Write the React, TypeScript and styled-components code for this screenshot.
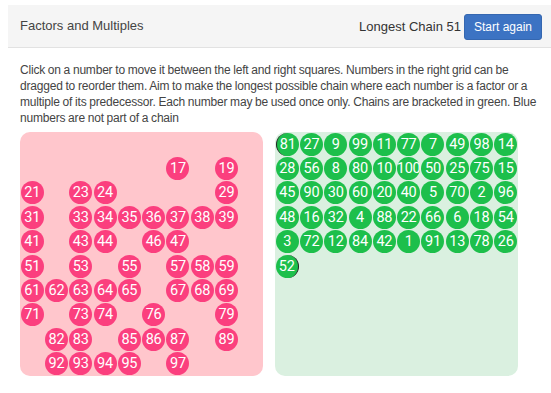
import React, { useState } from 'react';
import styled, { createGlobalStyle, css } from 'styled-components';

const GlobalStyle = createGlobalStyle`
  body {
    margin: 0;
    background: #fff;
    font-family: "Liberation Sans", Arial, sans-serif;
    color: #333;
  }
`;

const Page = styled.div`
  padding: 5px 0 0 8px;
`;

const Header = styled.header`
  display: flex;
  justify-content: space-between;
  align-items: center;
  height: 43px;
  padding: 0 9px 0 12px;
  background: #f5f5f5;
  border-bottom: 1px solid #e2e2e2;
  box-sizing: border-box;
`;

const Title = styled.div`
  font-size: 13px;
  color: #444;
  margin-top: -1px;
`;

const Status = styled.div`
  display: flex;
  align-items: center;
  gap: 3px;
  font-size: 13px;
  color: #333;
`;

const Button = styled.button`
  height: 26px;
  padding: 0 9px;
  margin-top: 2px;
  border: 1px solid #3567b0;
  border-radius: 3px;
  background: #3c73c3;
  color: #fff;
  font-family: "Liberation Sans", Arial, sans-serif;
  font-size: 12px;
  cursor: pointer;
`;

const Intro = styled.p`
  margin: 14px 0 0 12px;
  max-width: 529px;
  font-size: 12px;
  letter-spacing: -0.2px;
  word-spacing: -0.3px;
  line-height: 16px;
  color: #444;
`;

const Boards = styled.div`
  display: flex;
  gap: 12px;
  margin: 6px 0 0 12px;
`;

const Board = styled.div<{ $side: 'left' | 'right' }>`
  width: 243px;
  height: 244px;
  border-radius: 10px;
  box-sizing: border-box;
  background: ${p => (p.$side === 'left' ? '#ffc6cc' : '#daf0e0')};
`;

const LeftGrid = styled(Board)`
  display: grid;
  grid-template-columns: repeat(10, 24.3px);
  grid-template-rows: repeat(10, 24.4px);
  align-items: center;
  justify-items: center;
`;

const RightFlow = styled(Board)`
  display: flex;
  flex-wrap: wrap;
  align-content: flex-start;
`;

const Slot = styled.div`
  width: 24.3px;
  height: 24.4px;
  display: flex;
  align-items: center;
  justify-content: center;
`;

const Ball = styled.div<{ $tone: 'pink' | 'green'; $bracket?: 'start' | 'end' }>`
  width: 23px;
  height: 23px;
  border-radius: 50%;
  box-sizing: border-box;
  display: flex;
  align-items: center;
  justify-content: center;
  white-space: nowrap;
  font-family: Roboto, "Liberation Sans", sans-serif;
  font-size: 14.5px;
  letter-spacing: -0.2px;
  color: #fff;
  cursor: pointer;
  user-select: none;
  background: ${p => (p.$tone === 'pink' ? '#fb3f7e' : '#1dbf4b')};
  ${p =>
    p.$bracket === 'start' &&
    css`
      border-left: 1.5px solid #222;
    `}
  ${p =>
    p.$bracket === 'end' &&
    css`
      border-right: 1.5px solid #222;
    `}
`;

const chainStart = [
  81, 27, 9, 99, 11, 77, 7, 49, 98, 14,
  28, 56, 8, 80, 10, 100, 50, 25, 75, 15,
  45, 90, 30, 60, 20, 40, 5, 70, 2, 96,
  48, 16, 32, 4, 88, 22, 66, 6, 18, 54,
  3, 72, 12, 84, 42, 1, 91, 13, 78, 26,
  52,
];

const App: React.FC = () => {
  const [chain, setChain] = useState<number[]>(chainStart);

  const pool = Array.from({ length: 100 }, (_, i) => i + 1).filter(n => !chain.includes(n));

  const toggle = (n: number) => {
    setChain(c => (c.includes(n) ? c.filter(x => x !== n) : [...c, n]));
  };

  return (
    <Page>
      <GlobalStyle />
      <Header>
        <Title>Factors and Multiples</Title>
        <Status>
          <span>Longest Chain {chain.length}</span>
          <Button onClick={() => setChain([])}>Start again</Button>
        </Status>
      </Header>

      <Intro>
        Click on a number to move it between the left and right squares. Numbers in the right grid can be
        dragged to reorder them. Aim to make the longest possible chain where each number is a factor or a
        multiple of its predecessor. Each number may be used once only. Chains are bracketed in green. Blue
        numbers are not part of a chain
      </Intro>

      <Boards>
        <LeftGrid $side="left">
          {pool.map(n => (
            <Ball
              key={n}
              $tone="pink"
              onClick={() => toggle(n)}
              style={{ gridRow: Math.floor((n - 1) / 10) + 1, gridColumn: ((n - 1) % 10) + 1 }}
            >
              {n}
            </Ball>
          ))}
        </LeftGrid>
        <RightFlow $side="right">
          {chain.map((n, i) => (
            <Slot key={n}>
              <Ball
                $tone="green"
                $bracket={i === 0 ? 'start' : i === chain.length - 1 ? 'end' : undefined}
                onClick={() => toggle(n)}
              >
                {n}
              </Ball>
            </Slot>
          ))}
        </RightFlow>
      </Boards>
    </Page>
  );
};

export default App;
